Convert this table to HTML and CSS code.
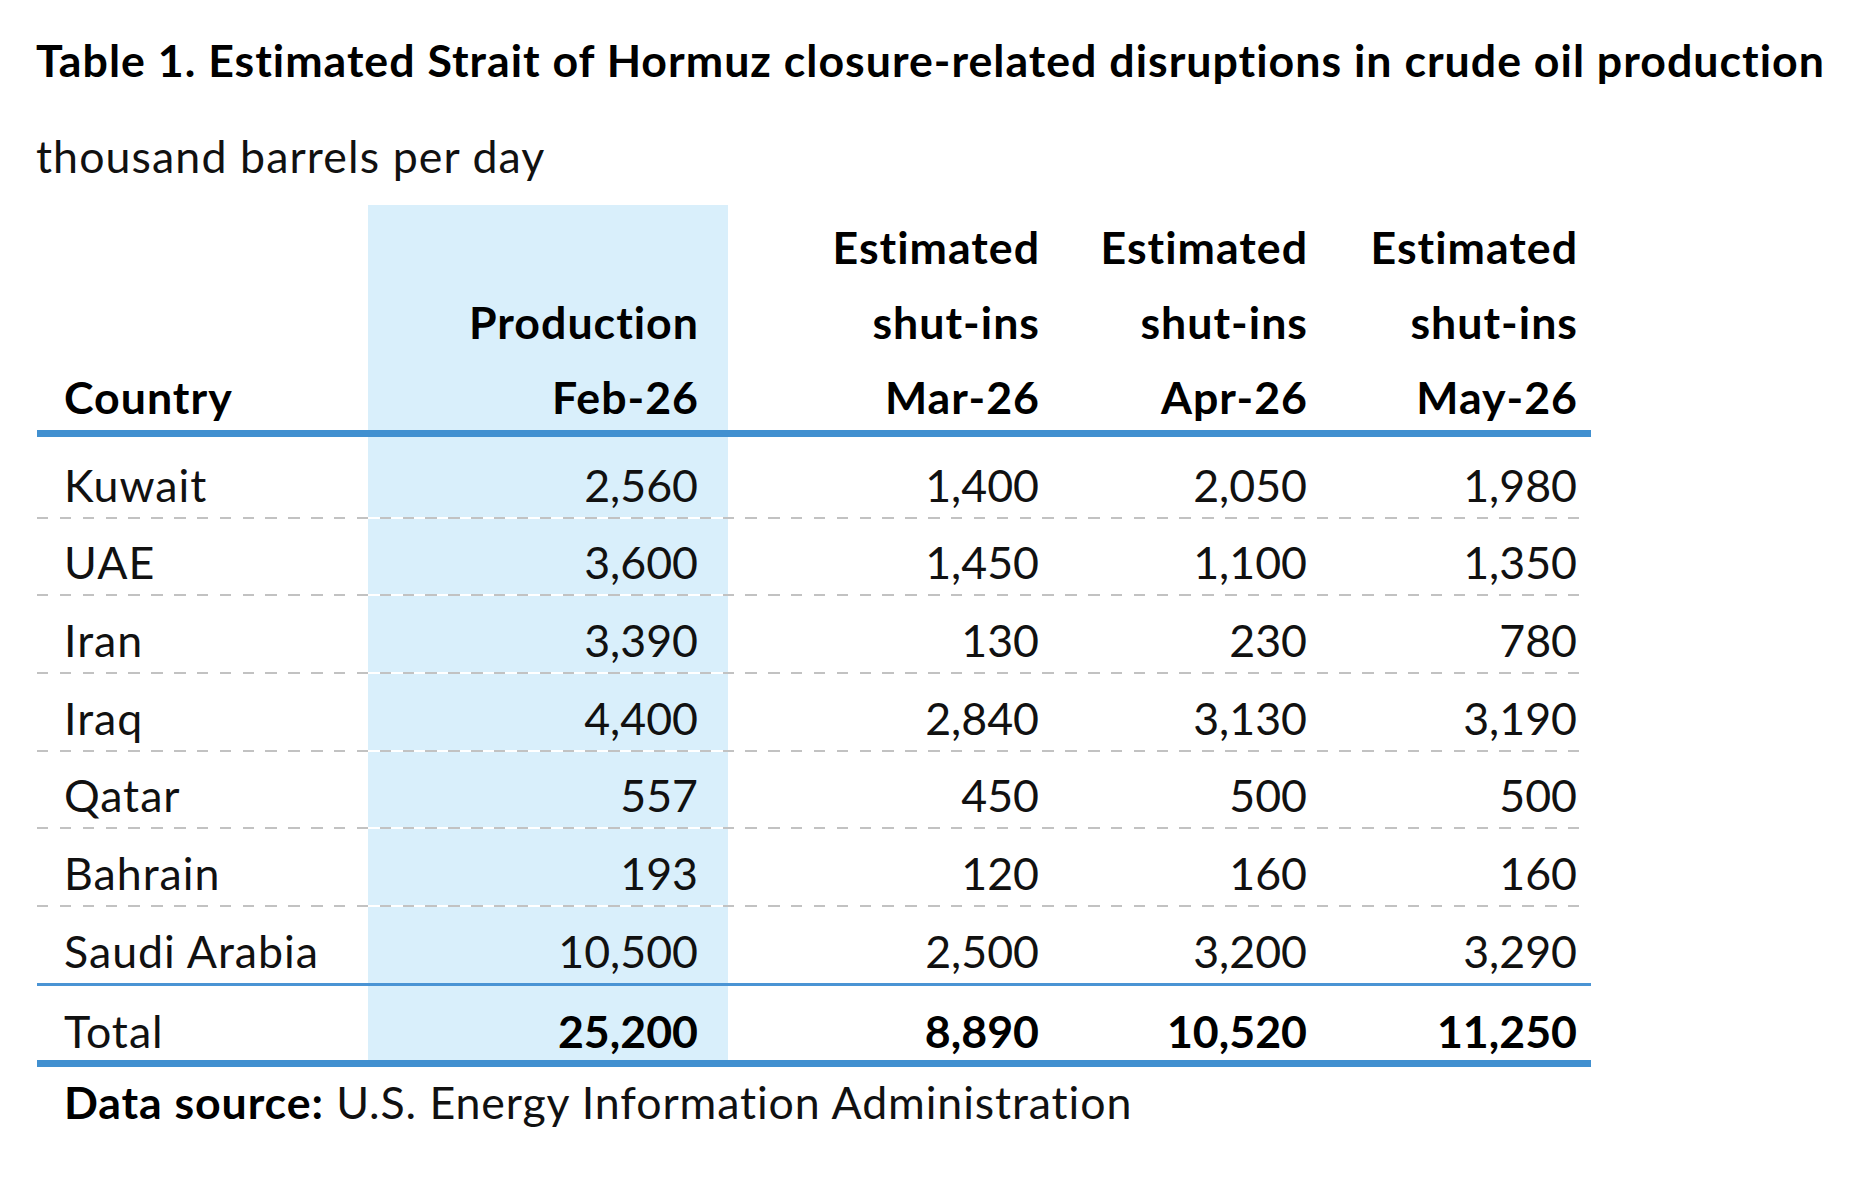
FILE: index.html
```html
<!DOCTYPE html>
<html lang="en">
<head>
<meta charset="utf-8">
<title>Table 1. Estimated Strait of Hormuz closure-related disruptions</title>
<link rel="stylesheet" href="styles.css">
</head>
<body>
<div class="page">
  <h1 class="title">Table 1. Estimated Strait of Hormuz closure-related disruptions in crude oil production</h1>
  <p class="unit">thousand barrels per day</p>
  <div class="tbl">
    <div class="row head">
      <div class="c name"><div class="hdr">Country</div></div>
      <div class="c prod"><div class="hdr">Production<br>Feb-26</div></div>
      <div class="c"><div class="hdr">Estimated<br>shut-ins<br>Mar-26</div></div>
      <div class="c"><div class="hdr">Estimated<br>shut-ins<br>Apr-26</div></div>
      <div class="c"><div class="hdr">Estimated<br>shut-ins<br>May-26</div></div>
    </div>
    <div class="rule thick"></div>
    <div class="row first">
      <div class="c name">Kuwait</div><div class="c prod num">2,560</div><div class="c num">1,400</div><div class="c num">2,050</div><div class="c num">1,980</div>
    </div>
    <div class="rule dash"></div>
    <div class="row">
      <div class="c name">UAE</div><div class="c prod num">3,600</div><div class="c num">1,450</div><div class="c num">1,100</div><div class="c num">1,350</div>
    </div>
    <div class="rule dash"></div>
    <div class="row">
      <div class="c name">Iran</div><div class="c prod num">3,390</div><div class="c num">130</div><div class="c num">230</div><div class="c num">780</div>
    </div>
    <div class="rule dash"></div>
    <div class="row">
      <div class="c name">Iraq</div><div class="c prod num">4,400</div><div class="c num">2,840</div><div class="c num">3,130</div><div class="c num">3,190</div>
    </div>
    <div class="rule dash"></div>
    <div class="row">
      <div class="c name">Qatar</div><div class="c prod num">557</div><div class="c num">450</div><div class="c num">500</div><div class="c num">500</div>
    </div>
    <div class="rule dash"></div>
    <div class="row">
      <div class="c name">Bahrain</div><div class="c prod num">193</div><div class="c num">120</div><div class="c num">160</div><div class="c num">160</div>
    </div>
    <div class="rule dash"></div>
    <div class="row">
      <div class="c name">Saudi Arabia</div><div class="c prod num">10,500</div><div class="c num">2,500</div><div class="c num">3,200</div><div class="c num">3,290</div>
    </div>
    <div class="rule thin"></div>
    <div class="row total">
      <div class="c name">Total</div><div class="c prod num strong">25,200</div><div class="c num strong">8,890</div><div class="c num strong">10,520</div><div class="c num strong">11,250</div>
    </div>
    <div class="rule thick"></div>
  </div>
  <p class="source"><b>Data source:</b> U.S. Energy Information Administration</p>
</div>
</body>
</html>
```

FILE: styles.css
```css
html, body {
  margin: 0;
  padding: 0;
  background: #ffffff;
}

body {
  font-family: Lato, "Liberation Sans", sans-serif;
  font-size: 44.7px;
  color: #111111;
  letter-spacing: 1px;
  font-variant-ligatures: none;
}

.page {
  padding: 27.7px 0 0 36px;
}

.title {
  margin: 0;
  font-size: 44.7px;
  font-weight: 700;
  line-height: 64px;
  white-space: nowrap;
  color: #000000;
  letter-spacing: 1px;
}

.unit {
  margin: 32px 0 0;
  line-height: 64px;
  letter-spacing: 1.1px;
}

.tbl {
  margin: 17.3px 0 0 1px;
  width: 1554px;
}

.row {
  display: grid;
  grid-template-columns: 331px 360px 325px 268px 270px;
}

.c {
  padding: 11.7px 13px 0 0;
  line-height: 64px;
  text-align: right;
  white-space: nowrap;
}

.c.name {
  text-align: left;
  padding-left: 27px;
}

.c.prod {
  background: #d9effb;
  padding-right: 29px;
}

.c.num {
  letter-spacing: 0;
  padding-right: 14px;
}

.c.prod.num {
  padding-right: 30px;
}

.head .c {
  display: flex;
  flex-direction: column;
  justify-content: flex-end;
  padding-top: 5.2px;
  line-height: 75px;
  font-weight: 700;
  color: #000000;
}

.hdr {
  margin-bottom: -5.2px;
}

.first .c {
  padding-top: 15.7px;
}

.total .c {
  padding-top: 16.7px;
  line-height: 58px;
}

.strong {
  font-weight: 700;
  color: #000000;
}

.rule.thick {
  height: 7px;
  background: #4190d0;
}

.rule.thin {
  height: 3px;
  background: #4a94d4;
}

.rule.dash {
  height: 2px;
  background: repeating-linear-gradient(90deg, #c2c2c2 0 11.4px, #ffffff 11.4px 22.85px);
}

.source {
  margin: 2.7px 0 0 28px;
  line-height: 64px;
  letter-spacing: 0.9px;
}

.source b {
  font-weight: 700;
  color: #000000;
}
```
